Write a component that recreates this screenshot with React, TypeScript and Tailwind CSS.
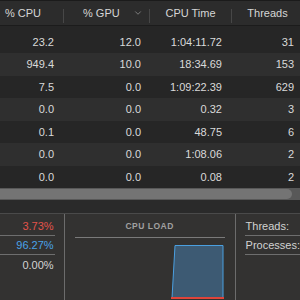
import { ChevronDown } from 'lucide-react';

const rows = [
  { cpu: '23.2', gpu: '12.0', time: '1:04:11.72', threads: '31' },
  { cpu: '949.4', gpu: '10.0', time: '18:34.69', threads: '153' },
  { cpu: '7.5', gpu: '0.0', time: '1:09:22.39', threads: '629' },
  { cpu: '0.0', gpu: '0.0', time: '0.32', threads: '3' },
  { cpu: '0.1', gpu: '0.0', time: '48.75', threads: '6' },
  { cpu: '0.0', gpu: '0.0', time: '1:08.06', threads: '2' },
  { cpu: '0.0', gpu: '0.0', time: '0.08', threads: '2' },
];

const cols = 'grid grid-cols-[64px_86px_82px_68px]';

function Sep() {
  return <div className="absolute right-0 top-[8px] h-[14px] w-px bg-[#474747]" />;
}

export default function App() {
  return (
    <div
      className="flex h-[300px] w-[300px] flex-col overflow-hidden bg-[#262626] text-[#dadada]"
      style={{ fontFamily: '"Liberation Sans", Arial, sans-serif' }}
    >
      {/* header */}
      <div className={`${cols} h-[28px] border-t border-b border-t-[#1b1b1b] border-b-[#1c1c1c] bg-[#2c2c2c] text-[11px] text-[#d6d6d6]`}>
        <div className="relative flex items-center pl-[5px]">
          % CPU
          <Sep />
        </div>
        <div className="relative flex items-center justify-between pl-[19px] pr-[7px]">
          <span>% GPU</span>
          <ChevronDown className="h-[10px] w-[10px] text-[#8a8a8a]" strokeWidth={2} />
          <Sep />
        </div>
        <div className="relative flex items-center justify-center pr-[1px]">
          CPU Time
          <Sep />
        </div>
        <div className="flex items-center justify-center pl-[3px]">Threads</div>
      </div>

      {/* rows */}
      <div className="pt-[4.5px] text-[11px]">
        {rows.map((r, i) => (
          <div
            key={i}
            className={`${cols} h-[22.5px] items-center ${i % 2 === 1 ? 'bg-[#2f2f2f]' : 'bg-[#262626]'}`}
          >
            <div className="pr-[10px] text-right">{r.cpu}</div>
            <div className="pr-[9px] text-right">{r.gpu}</div>
            <div className="pr-[10px] text-right">{r.time}</div>
            <div className="pr-[6px] text-right">{r.threads}</div>
          </div>
        ))}
      </div>

      {/* scrollbar */}
      <div className="flex h-[13px] items-center bg-[#585858] pr-[8px]">
        <div className="h-[10px] w-full rounded-r-full bg-[#747474]" />
      </div>
      <div className="h-[14px] bg-[#2a2a2a]" />

      {/* bottom panel */}
      <div className="flex flex-1 border-t border-[#4a4a4a] bg-[#333231] text-[11px]">
        <div className="w-[66px] border-r border-[#6c6c6c] pt-[3px]">
          <div className="mr-[9px] flex h-[19px] items-center justify-end border-b border-[#6e6e6e] pr-px text-[#e2534b]">
            3.73%
          </div>
          <div className="mr-[9px] flex h-[19px] items-center justify-end border-b border-[#6e6e6e] pr-px text-[#4aa2e8]">
            96.27%
          </div>
          <div className="flex h-[19px] items-center justify-end pr-[10px] text-[#d4d4d4]">0.00%</div>
        </div>

        <div className="flex w-[171px] flex-col border-r border-[#6c6c6c]">
          <div className="pt-[6px] text-center text-[8.5px] font-bold tracking-[0.5px] text-[#a0a0a0]">CPU LOAD</div>
          <div className="mx-[10px] mt-[4px] h-px bg-[#7a7a7a]" />
          <svg width="170" height="61" viewBox="0 0 170 61" className="mt-px">
            <polygon points="107,59 110,6.5 158,6.5 158,59" fill="#3d5a73" stroke="#4a9fe0" strokeWidth="1" />
            <line x1="106" y1="59" x2="159" y2="59" stroke="#e0443a" strokeWidth="2" />
          </svg>
        </div>

        <div className="flex-1 pl-[9px] pt-[3px] text-[#d2d2d2]">
          <div className="flex h-[19px] items-center border-b border-[#6e6e6e] pl-px">Threads:</div>
          <div className="flex h-[19px] items-center border-b border-[#6e6e6e] pl-px">Processes:</div>
        </div>
      </div>
    </div>
  );
}
